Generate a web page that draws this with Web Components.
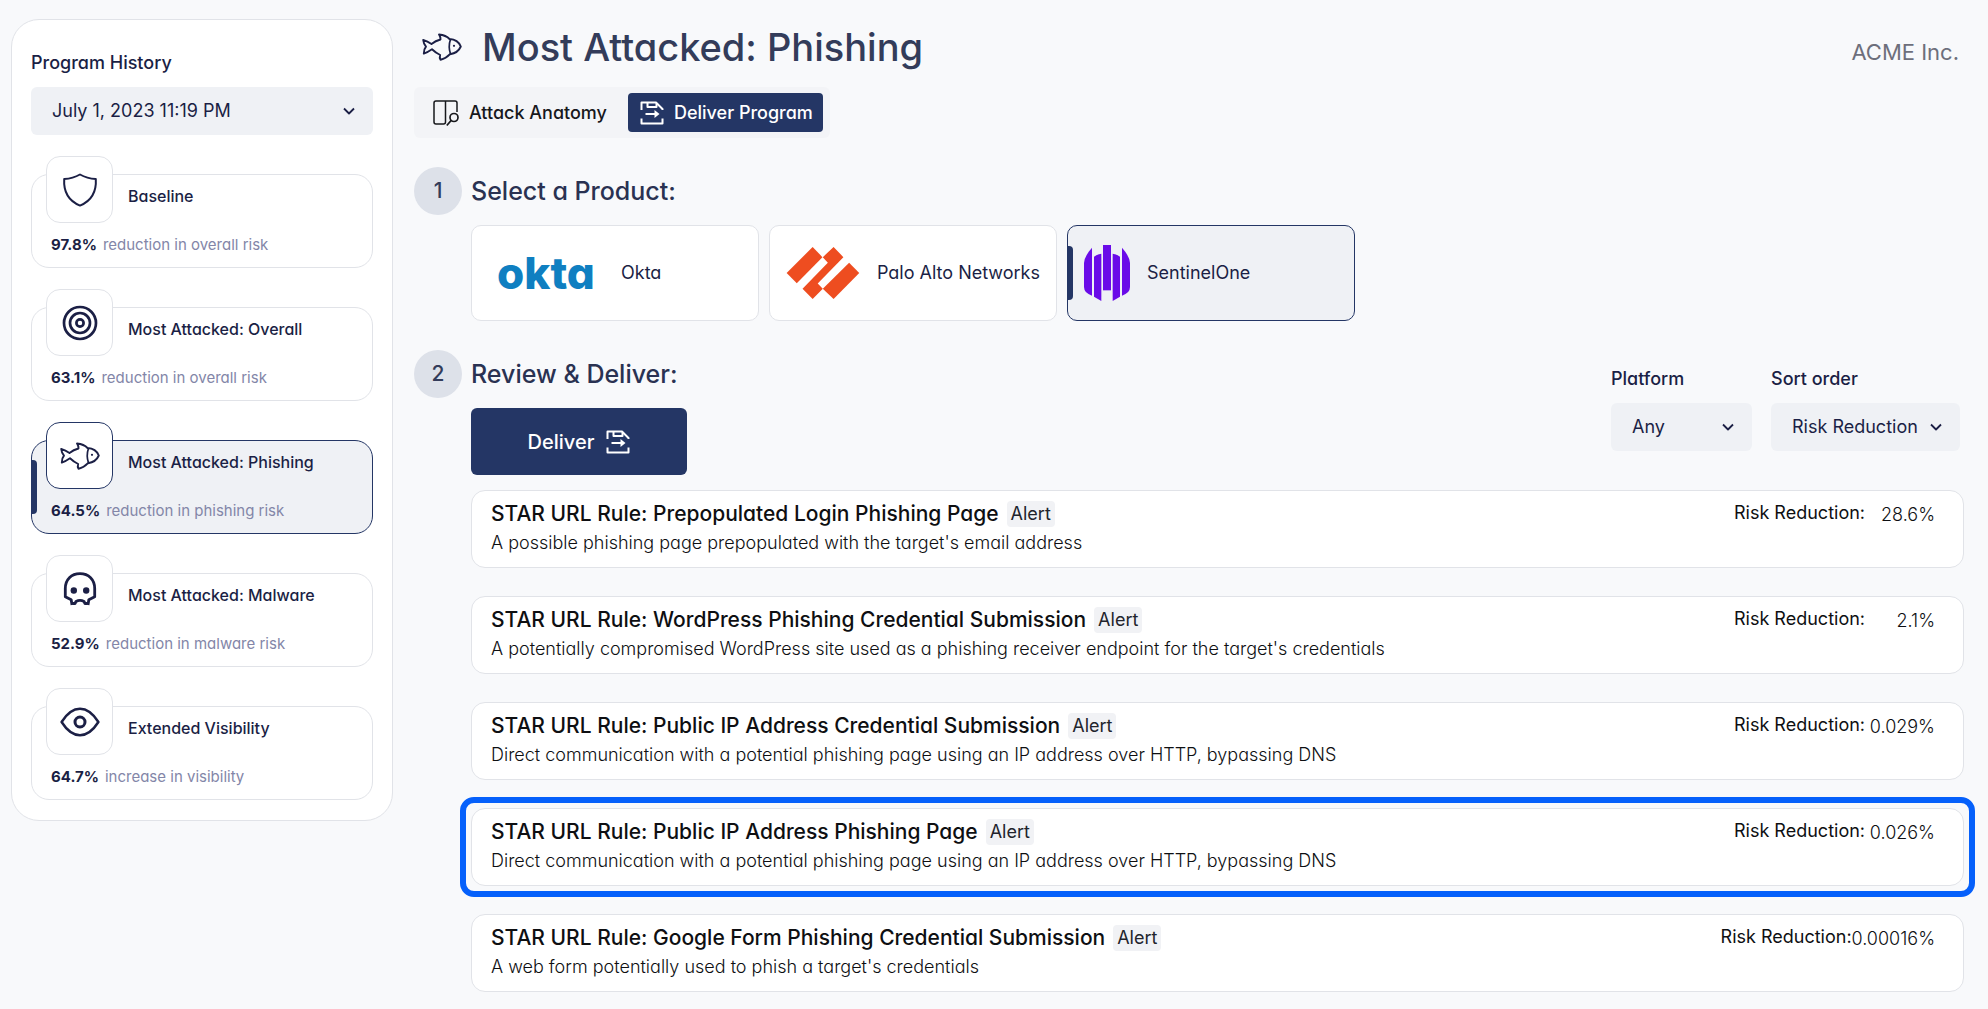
<!DOCTYPE html>
<html lang="en">
<head>
<meta charset="utf-8">
<meta name="viewport" content="width=device-width, initial-scale=1">
<title>Most Attacked: Phishing</title>
<style>
  :root {
    --page: #f8f9fb;
    --surface: #ffffff;
    --muted: #eff1f5;
    --line: #e1e3e8;
    --navy: #243665;
    --ink: #1b1f45;
    --heading: #333c5a;
    --subtle: #8386a8;
    --highlight: #0560fb;
  }

  body {
    margin: 0;
    background: var(--page);
    color: var(--ink);
    font-family: Inter, "Liberation Sans", sans-serif;
    font-feature-settings: "cv11";
    font-size: 18px;
    line-height: 24px;
  }
</style>
</head>
<body>
<program-page></program-page>

<script>
const ICONS = {
  shield: {
    width: 34, height: 34,
    body: '<path d="M17 1.5Q24 5.5 32.8 6Q34 25.5 17 32.6Q0 25.5 1.2 6Q10 5.5 17 1.5Z" stroke-width="2"/>'
  },
  target: {
    width: 36, height: 36,
    body: '<g stroke-width="2.7"><circle cx="18" cy="18" r="16"/><circle cx="18" cy="18" r="10"/><circle cx="18" cy="18" r="3.6"/></g>'
  },
  fish: {
    width: 40, height: 28,
    body: `<path d="M1.2 7Q5.5 8.2 9.5 11Q13.5 7.8 18.5 6.5Q18.5 3.5 17 1.5Q24 2.2 27.5 6Q36 6.5 38.8 13.5Q36 20 28 21.2Q24 25.5 18.5 26.8Q17.2 24.5 18.2 22Q14 20 10 16.2Q6 19 1.8 20.6Q1.6 16.5 4 13.7Q1.6 11 1.2 7Z" stroke-width="1.9"/>
      <path d="M28.5 6.2Q26 13.5 28.5 21" stroke-width="1.7"/><circle cx="32" cy="12.8" r="1.1" fill="currentColor" stroke="none"/>`
  },
  skull: {
    width: 34, height: 34,
    body: `<path d="M9 33L8.2 27.8L2.3 24.7V16.5C2.3 7.5 8.3 1.6 17 1.6S31.700 7.5 31.7 16.5V24.7L25.8 27.8L25 33" stroke-width="2.8"/>
      <path d="M9.5 31.5H12L13 29.5Q17 27.2 21 29.5L22 31.5H24.5" stroke-width="2.8"/>
      <g fill="currentColor" stroke="none"><circle cx="10.8" cy="18.5" r="3.2"/><circle cx="23.2" cy="18.5" r="3.2"/></g>`
  },
  eye: {
    width: 40, height: 30,
    body: `<path d="M1.6 15C7 6.5 12.5 1.8 20 1.8S33 6.5 38.4 15C33 23.5 27.5 28.2 20 28.2S7 23.5 1.6 15Z" stroke-width="2.5"/>
      <circle cx="20" cy="15" r="5" stroke-width="3"/>`
  },
  anatomy: {
    width: 26, height: 26,
    body: `<path d="M12.5 1V22Q12.5 24 10.5 24H3Q1 24 1 22V3Q1 1 3 1H22Q24 1 24 3V12M12.5 1V22" stroke-width="1.5"/>
      <circle cx="21" cy="17.5" r="4" stroke-width="1.7"/><path d="M18.200 20.4L13.8 25.5" stroke-width="1.7"/>`
  },
  deliver: {
    width: 24, height: 24,
    body: `<g stroke-width="2"><path d="M1.5 9V1.5H16L22.5 8V9"/><path d="M7.5 1.5V6H16.5V2"/><path d="M1.5 17.5V22.5H22.5V17.5"/><path d="M5.5 13H15"/></g>
      <path d="M14.5 9L19.5 13L14.5 17Z" fill="currentColor" stroke="none"/>`
  },
  chevron: {
    width: 12, height: 8,
    body: '<path d="M1 1.5L6 6.500L11 1.5" stroke-width="1.8"/>'
  }
};

class AppIcon extends HTMLElement {
  connectedCallback() {
    const icon = ICONS[this.getAttribute('name')];
    this.attachShadow({ mode: 'open' });
    this.shadowRoot.innerHTML = `
      <style>
        :host {
          display: inline-flex;
          flex: none;
        }

        svg {
          display: block;
          overflow: visible;
        }
      </style>
      <svg width="${icon.width}" height="${icon.height}" viewBox="0 0 ${icon.width} ${icon.height}"
        fill="none" stroke="currentColor" stroke-linejoin="round" aria-hidden="true">${icon.body}</svg>
    `;
  }
}

class SelectField extends HTMLElement {
  connectedCallback() {
    const options = this.getAttribute('options').split('|');
    this.attachShadow({ mode: 'open' });
    this.shadowRoot.innerHTML = `
      <style>
        :host {
          display: flex;
          flex-direction: column;
          gap: 12px;
        }

        label {
          font-weight: 500;
        }

        .control {
          display: grid;
          grid-template-columns: 1fr auto;
          align-items: center;
        }

        select {
          grid-area: 1 / 1 / 2 / 3;
          appearance: none;
          width: 100%;
          height: 48px;
          margin: 0;
          padding: 0 42px 0 21px;
          border: 0;
          border-radius: 6px;
          background: var(--muted);
          color: inherit;
          font: inherit;
          font-feature-settings: inherit;
        }

        app-icon {
          grid-area: 1 / 2;
          margin-right: 18px;
          pointer-events: none;
        }
      </style>
      <label for="field">${this.getAttribute('label')}</label>
      <div class="control">
        <select id="field">${options.map(option => `<option>${option}</option>`).join('')}</select>
        <app-icon name="chevron"></app-icon>
      </div>
    `;
  }
}

class HistoryCard extends HTMLElement {
  connectedCallback() {
    this.attachShadow({ mode: 'open' });
    this.shadowRoot.innerHTML = `
      <style>
        :host {
          display: block;
        }

        button {
          position: relative;
          display: flex;
          flex-direction: column;
          gap: 25px;
          width: 100%;
          padding: 9px 19px 10px;
          border: 1px solid var(--line);
          border-radius: 18px;
          background: var(--surface);
          color: inherit;
          font: inherit;
          font-feature-settings: inherit;
          text-align: left;
          cursor: pointer;
        }

        .badge {
          position: absolute;
          top: -19px;
          left: 14px;
          display: grid;
          place-items: center;
          box-sizing: border-box;
          width: 67px;
          height: 67px;
          border: 1px solid var(--line);
          border-radius: 14px;
          background: var(--surface);
        }

        .name {
          padding-left: 77px;
          font-size: 16px;
          font-weight: 500;
        }

        .stat {
          display: flex;
          gap: 6px;
          color: var(--subtle);
          font-size: 15px;
        }

        .stat strong {
          color: var(--ink);
          font-weight: 700;
        }

        :host([active]) button {
          border-color: var(--navy);
          background: var(--muted);
        }

        :host([active]) .badge {
          border-color: var(--navy);
        }

        :host([active]) button::before {
          content: "";
          position: absolute;
          top: 19px;
          bottom: 19px;
          left: -1px;
          width: 6px;
          border-radius: 0 4px 4px 0;
          background: var(--navy);
        }
      </style>
      <button type="button" aria-pressed="${this.hasAttribute('active')}">
        <span class="badge"><app-icon name="${this.getAttribute('icon')}"></app-icon></span>
        <span class="name"><slot></slot></span>
        <span class="stat"><strong>${this.getAttribute('value')}</strong><span>${this.getAttribute('note')}</span></span>
      </button>
    `;
  }
}

class HistoryPanel extends HTMLElement {
  connectedCallback() {
    this.attachShadow({ mode: 'open' });
    this.shadowRoot.innerHTML = `
      <style>
        :host {
          display: flex;
          flex-direction: column;
          gap: 39px;
          box-sizing: border-box;
          padding: 31px 19px 20px;
          border: 1px solid var(--line);
          border-radius: 28px;
          background: var(--surface);
        }
      </style>
      <select-field label="Program History" options="July 1, 2023 11:19 PM"></select-field>
      <slot></slot>
    `;
  }
}

class ViewTabs extends HTMLElement {
  connectedCallback() {
    this.attachShadow({ mode: 'open' });
    this.shadowRoot.innerHTML = `
      <style>
        :host {
          display: flex;
          width: fit-content;
          gap: 9px;
          padding: 6px 7px;
          border-radius: 6px;
          background: #f3f4f7;
        }

        button {
          display: flex;
          align-items: center;
          gap: 10px;
          height: 39px;
          padding: 0 12px;
          border: 0;
          border-radius: 4px;
          background: none;
          color: #17181c;
          font: inherit;
          font-feature-settings: inherit;
          font-weight: 500;
          cursor: pointer;
        }

        button[aria-selected="true"] {
          padding: 0 10px 0 12px;
          background: var(--navy);
          color: #fff;
        }
      </style>
      <button type="button" role="tab" aria-selected="false"><app-icon name="anatomy"></app-icon>Attack Anatomy</button>
      <button type="button" role="tab" aria-selected="true"><app-icon name="deliver"></app-icon>Deliver Program</button>
    `;
    this.setAttribute('role', 'tablist');
  }
}

class StepHeading extends HTMLElement {
  connectedCallback() {
    this.attachShadow({ mode: 'open' });
    this.shadowRoot.innerHTML = `
      <style>
        :host {
          display: flex;
          align-items: center;
          gap: 9px;
        }

        .number {
          display: grid;
          place-items: center;
          width: 48px;
          height: 48px;
          border-radius: 50%;
          background: #dde1e9;
          color: var(--heading);
          font-size: 21px;
          font-weight: 500;
        }

        h2 {
          margin: 0;
          color: #2a3252;
          font-size: 25px;
          font-weight: 500;
          line-height: 32px;
        }
      </style>
      <span class="number">${this.getAttribute('number')}</span>
      <h2><slot></slot></h2>
    `;
  }
}

class ProductCard extends HTMLElement {
  connectedCallback() {
    this.attachShadow({ mode: 'open' });
    this.shadowRoot.innerHTML = `
      <style>
        :host {
          display: block;
        }

        button {
          position: relative;
          display: flex;
          align-items: center;
          gap: 17px;
          box-sizing: border-box;
          width: 100%;
          height: 96px;
          padding: 0 16px;
          border: 1px solid var(--line);
          border-radius: 10px;
          background: var(--surface);
          color: inherit;
          font: inherit;
          font-feature-settings: inherit;
          white-space: nowrap;
          cursor: pointer;
        }

        :host([active]) button {
          border-color: var(--navy);
          background: var(--muted);
        }

        :host([active]) button::before {
          content: "";
          position: absolute;
          top: 20px;
          bottom: 20px;
          left: -1px;
          width: 6px;
          border-radius: 0 4px 4px 0;
          background: var(--navy);
        }
      </style>
      <button type="button" aria-pressed="${this.hasAttribute('active')}">
        <slot name="logo"></slot>
        <slot></slot>
      </button>
    `;
  }
}

class RuleRow extends HTMLElement {
  connectedCallback() {
    this.attachShadow({ mode: 'open' });
    this.shadowRoot.innerHTML = `
      <style>
        :host {
          position: relative;
          display: flex;
          justify-content: space-between;
          gap: 24px;
          padding: 10px 28px 12px 19px;
          border: 1px solid var(--line);
          border-radius: 14px;
          background: var(--surface);
          color: #0e0f12;
        }

        :host([highlighted])::after {
          content: "";
          position: absolute;
          inset: -12px;
          border: 6px solid var(--highlight);
          border-radius: 14px;
          pointer-events: none;
        }

        .top {
          display: flex;
          align-items: center;
          gap: 8px;
        }

        h3 {
          margin: 0;
          font-size: 21px;
          font-weight: 500;
          line-height: 26px;
        }

        .tag {
          padding: 1px 4px;
          border-radius: 4px;
          background: #f1f2f5;
          color: #22242c;
        }

        p {
          margin: 4px 0 0;
          font-weight: 300;
        }

        .risk {
          display: flex;
          align-items: flex-start;
          white-space: nowrap;
        }

        .value {
          min-width: 70px;
          padding-top: 2px;
          font-weight: 300;
          text-align: right;
        }
      </style>
      <div>
        <div class="top"><h3><slot></slot></h3><span class="tag">Alert</span></div>
        <p>${this.getAttribute('summary')}</p>
      </div>
      <div class="risk"><span>Risk Reduction:</span><span class="value">${this.getAttribute('risk')}</span></div>
    `;
  }
}

class ProgramPage extends HTMLElement {
  constructor() {
    super();
    this.attachShadow({ mode: 'open' });
    this.history = [
      { icon: 'shield', name: 'Baseline', value: '97.8%', note: 'reduction in overall risk' },
      { icon: 'target', name: 'Most Attacked: Overall', value: '63.1%', note: 'reduction in overall risk' },
      { icon: 'fish', name: 'Most Attacked: Phishing', value: '64.5%', note: 'reduction in phishing risk', active: true },
      { icon: 'skull', name: 'Most Attacked: Malware', value: '52.9%', note: 'reduction in malware risk' },
      { icon: 'eye', name: 'Extended Visibility', value: '64.7%', note: 'increase in visibility' }
    ];
    this.rules = [
      { name: 'STAR URL Rule: Prepopulated Login Phishing Page', summary: "A possible phishing page prepopulated with the target's email address", risk: '28.6%' },
      { name: 'STAR URL Rule: WordPress Phishing Credential Submission', summary: "A potentially compromised WordPress site used as a phishing receiver endpoint for the target's credentials", risk: '2.1%' },
      { name: 'STAR URL Rule: Public IP Address Credential Submission', summary: 'Direct communication with a potential phishing page using an IP address over HTTP, bypassing DNS', risk: '0.029%' },
      { name: 'STAR URL Rule: Public IP Address Phishing Page', summary: 'Direct communication with a potential phishing page using an IP address over HTTP, bypassing DNS', risk: '0.026%', highlighted: true },
      { name: 'STAR URL Rule: Google Form Phishing Credential Submission', summary: "A web form potentially used to phish a target's credentials", risk: '0.00016%' }
    ];
  }

  connectedCallback() {
    this.render();
  }

  render() {
    this.shadowRoot.innerHTML = `
      <style>
        :host {
          display: grid;
          grid-template-columns: 382px minmax(0, 1fr);
          align-items: start;
          gap: 21px;
          padding: 19px 24px 16px 11px;
        }

        header {
          display: flex;
          align-items: center;
          gap: 20px;
          margin-bottom: 17px;
          padding: 5px 5px 0 8px;
        }

        h1 {
          flex: 1;
          margin: 0;
          color: var(--heading);
          font-size: 38px;
          font-weight: 500;
          line-height: 46px;
        }

        .company {
          padding-top: 10px;
          color: #6d6f7b;
          font-size: 22px;
        }

        section {
          margin-top: 29px;
        }

        .content {
          margin: 10px 0 0 57px;
        }

        .products {
          display: grid;
          grid-template-columns: repeat(auto-fit, 288px);
          gap: 10px;
        }

        .okta {
          width: 116px;
          color: #0f7fc1;
          font-size: 44px;
          font-weight: 800;
          line-height: 56px;
          text-align: center;
        }

        .review {
          display: flex;
          justify-content: space-between;
          align-items: flex-start;
        }

        .filters {
          display: flex;
          gap: 19px;
          padding: 17px 4px 0 0;
        }

        .filters select-field:first-child {
          width: 141px;
        }

        .deliver {
          display: flex;
          justify-content: center;
          align-items: center;
          gap: 12px;
          width: 216px;
          height: 67px;
          padding: 0;
          border: 0;
          border-radius: 6px;
          background: var(--navy);
          color: #fff;
          font: inherit;
          font-size: 20px;
          font-feature-settings: inherit;
          font-weight: 500;
          cursor: pointer;
        }

        .rules {
          display: grid;
          gap: 28px;
          margin: 15px 0 0 57px;
        }
      </style>
      <history-panel>
        ${this.history.map(item => `
          <history-card icon="${item.icon}" value="${item.value}" note="${item.note}" ${item.active ? 'active' : ''}>${item.name}</history-card>
        `).join('')}
      </history-panel>
      <main>
        <header>
          <app-icon name="fish"></app-icon>
          <h1>Most Attacked: Phishing</h1>
          <span class="company">ACME Inc.</span>
        </header>
        <view-tabs></view-tabs>
        <section>
          <step-heading number="1">Select a Product:</step-heading>
          <div class="content products">
            <product-card><span slot="logo" class="okta">okta</span>Okta</product-card>
            <product-card>
              <svg slot="logo" width="76" height="52" viewBox="0 0 215 154" fill="#ee4d20" aria-hidden="true">
                <path d="M77 0L106 30L30 107L0 77Z"/>
                <path d="M139 0L168 30L92 108L107 124L77 154L47 124L122 47L107 30Z"/>
                <path d="M185 47L215 77L139 154L107 124Z"/>
              </svg>
              Palo Alto Networks
            </product-card>
            <product-card active>
              <svg slot="logo" width="46" height="56" viewBox="0 0 138 168" fill="#6a0be8" aria-hidden="true">
                <path d="M24 8V152Q0 144 0 126V54Q2 32 24 8Z"/>
                <path d="M30 35Q40 28 52 26V168L30 155Z"/>
                <path d="M57 0H81V136H57Z"/>
                <path d="M108 35Q98 28 86 26V168L108 155Z"/>
                <path d="M114 8V152Q138 144 138 126V54Q136 32 114 8Z"/>
              </svg>
              SentinelOne
            </product-card>
          </div>
        </section>
        <section>
          <div class="review">
            <div>
              <step-heading number="2">Review &amp; Deliver:</step-heading>
              <div class="content">
                <button type="button" class="deliver">Deliver<app-icon name="deliver"></app-icon></button>
              </div>
            </div>
            <div class="filters">
              <select-field label="Platform" options="Any"></select-field>
              <select-field label="Sort order" options="Risk Reduction"></select-field>
            </div>
          </div>
          <div class="rules">
            ${this.rules.map(rule => `
              <rule-row summary="${rule.summary}" risk="${rule.risk}" ${rule.highlighted ? 'highlighted' : ''}>${rule.name}</rule-row>
            `).join('')}
          </div>
        </section>
      </main>
    `;
  }
}

customElements.define('app-icon', AppIcon);
customElements.define('select-field', SelectField);
customElements.define('history-card', HistoryCard);
customElements.define('history-panel', HistoryPanel);
customElements.define('view-tabs', ViewTabs);
customElements.define('step-heading', StepHeading);
customElements.define('product-card', ProductCard);
customElements.define('rule-row', RuleRow);
customElements.define('program-page', ProgramPage);
</script>
</body>
</html>
